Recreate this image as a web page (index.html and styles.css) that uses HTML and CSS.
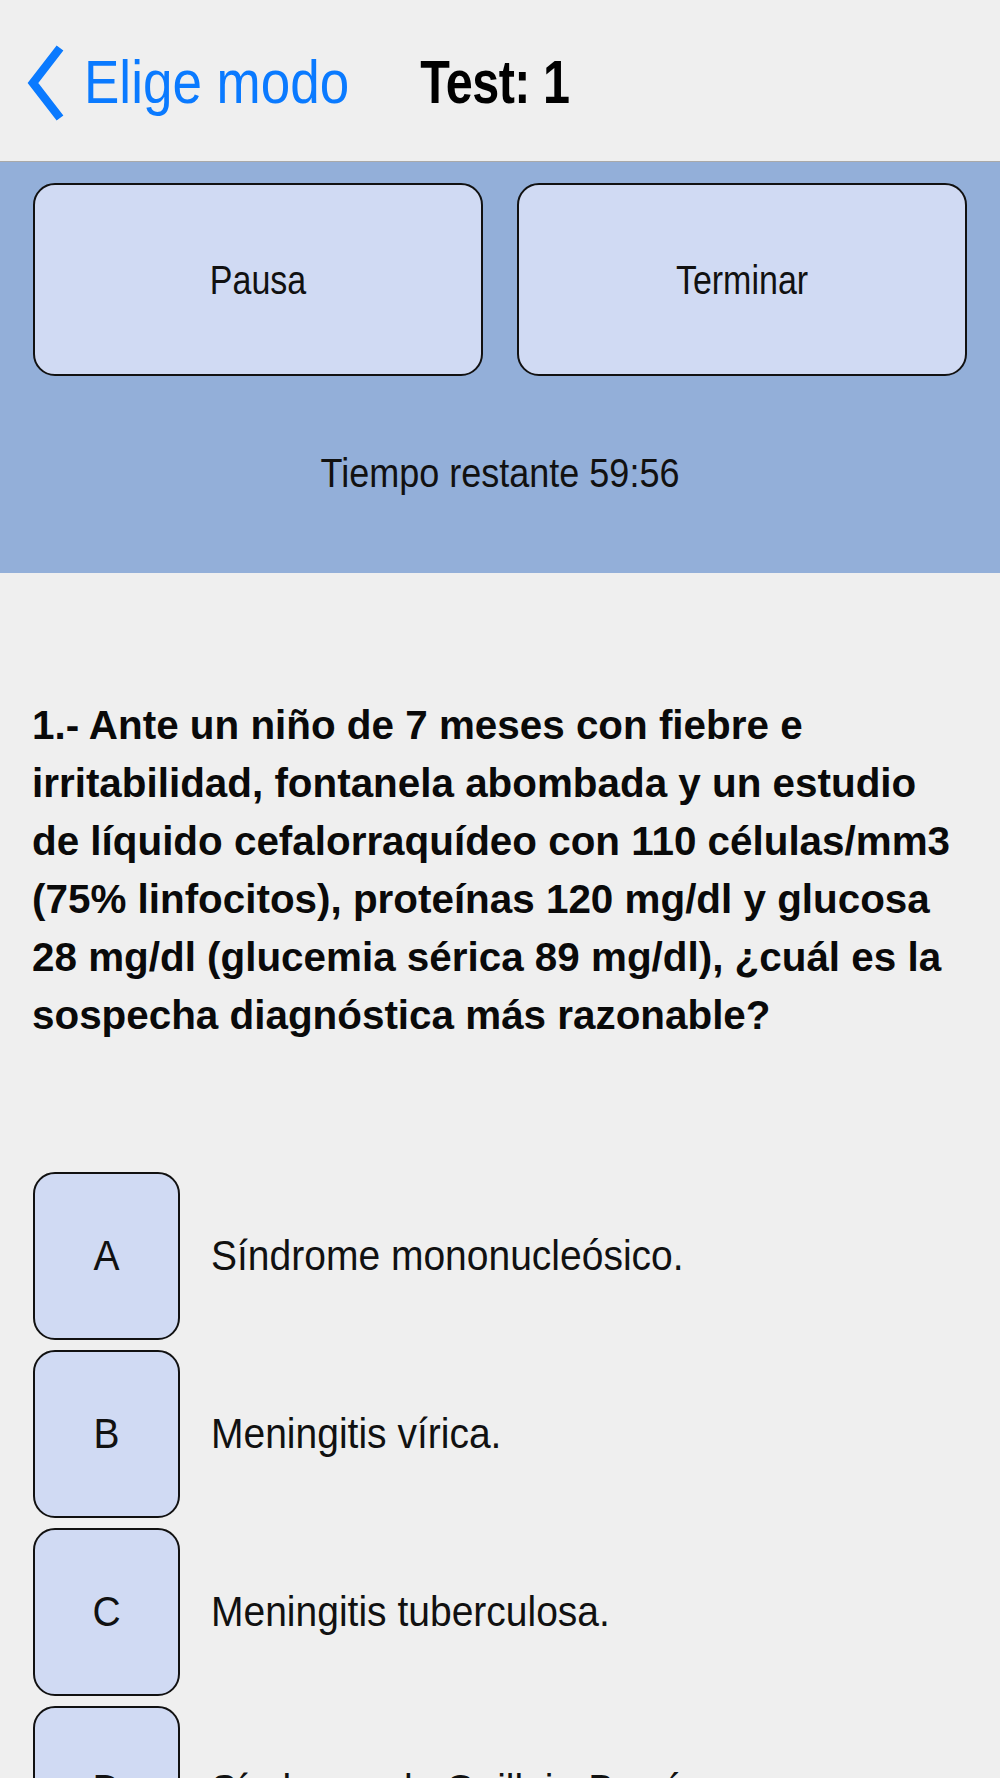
FILE: index.html
```html
<!DOCTYPE html>
<html lang="es">
<head>
<meta charset="utf-8">
<title>Test: 1</title>
<link rel="stylesheet" href="styles.css">
</head>
<body>
<header class="navbar">
  <a class="back">
    <svg class="chev" viewBox="0 0 40 76" aria-hidden="true"><polyline points="35,3 8,38 35,73" /></svg>
    <span class="back-label">Elige modo</span>
  </a>
  <h1 class="title"><span>Test: 1</span></h1>
</header>
<section class="controls">
  <div class="btn-row">
    <button class="ctrl-btn"><span class="btn-label">Pausa</span></button>
    <button class="ctrl-btn"><span class="btn-label">Terminar</span></button>
  </div>
  <div class="timer"><span class="timer-label">Tiempo restante 59:56</span></div>
</section>
<main class="quiz">
  <p class="question">1.- Ante un niño de 7 meses con fiebre e irritabilidad, fontanela abombada y un estudio de líquido cefalorraquídeo con 110 células/mm3 (75% linfocitos), proteínas 120 mg/dl y glucosa 28 mg/dl (glucemia sérica 89 mg/dl), ¿cuál es la sospecha diagnóstica más razonable?</p>
  <ul class="options">
    <li class="option">
      <div class="opt-key"><span class="opt-label">A</span></div>
      <div class="opt-text"><span class="opt-label">Síndrome mononucleósico.</span></div>
    </li>
    <li class="option">
      <div class="opt-key"><span class="opt-label">B</span></div>
      <div class="opt-text"><span class="opt-label">Meningitis vírica.</span></div>
    </li>
    <li class="option">
      <div class="opt-key"><span class="opt-label">C</span></div>
      <div class="opt-text"><span class="opt-label">Meningitis tuberculosa.</span></div>
    </li>
    <li class="option">
      <div class="opt-key"><span class="opt-label">D</span></div>
      <div class="opt-text"><span class="opt-label">Síndrome de Guillain-Barré.</span></div>
    </li>
  </ul>
</main>
</body>
</html>
```

FILE: styles.css
```css
html, body {
  margin: 0;
  padding: 0;
}

body {
  background: #efefef;
  font-family: "Liberation Sans", Arial, sans-serif;
  color: #000;
}

.navbar {
  box-sizing: border-box;
  height: 162px;
  border-bottom: 1px solid #a9a9a9;
  display: flex;
  align-items: center;
  padding: 4px 0 0 25px;
}

.back {
  display: flex;
  align-items: center;
  color: #0a7aff;
  text-decoration: none;
}

.chev {
  width: 40px;
  height: 76px;
  margin-right: 19px;
}

.chev polyline {
  fill: none;
  stroke: #0a7aff;
  stroke-width: 8.5;
  stroke-linejoin: miter;
  stroke-linecap: butt;
}

.back-label {
  display: inline-block;
  font-size: 53px;
  line-height: 1.15;
  transform: scaleY(1.16);
}

.title {
  margin: 0 0 0 71px;
  font-size: 48.5px;
  font-weight: 700;
  letter-spacing: -0.5px;
  line-height: 1.15;
}

.title span {
  display: inline-block;
  transform: scaleY(1.27);
}

.controls {
  background: #93afd9;
  padding: 21px 33px 4px;
}

.btn-row {
  display: flex;
  gap: 34px;
}

.ctrl-btn {
  flex: 1;
  height: 193px;
  background: #d0daf3;
  border: 2px solid #111;
  border-radius: 22px;
  padding: 0;
  font-family: inherit;
  font-size: 34px;
  color: #111;
}

.btn-label {
  display: inline-block;
  transform: scaleY(1.22);
}

.timer {
  height: 193px;
  display: flex;
  align-items: center;
  justify-content: center;
  font-size: 36px;
  color: #111;
}

.timer-label {
  display: inline-block;
  transform: scaleY(1.15);
}

.quiz {
  padding: 123px 0 0 0;
}

.question {
  margin: 0;
  padding-left: 32px;
  width: 930px;
  font-size: 40.4px;
  font-weight: 700;
  line-height: 58px;
  color: #0a0a0a;
}

.options {
  list-style: none;
  margin: 128px 0 0;
  padding: 0 0 0 33px;
  display: flex;
  flex-direction: column;
  gap: 10px;
}

.option {
  display: flex;
  align-items: center;
}

.opt-key {
  box-sizing: border-box;
  width: 147px;
  height: 168px;
  background: #d0daf3;
  border: 2px solid #111;
  border-radius: 22px;
  display: flex;
  align-items: center;
  justify-content: center;
  font-size: 39px;
  color: #111;
}

.opt-text {
  margin-left: 31px;
  font-size: 39px;
  color: #111;
}

.opt-label {
  display: inline-block;
  transform: scaleY(1.11);
}
```
